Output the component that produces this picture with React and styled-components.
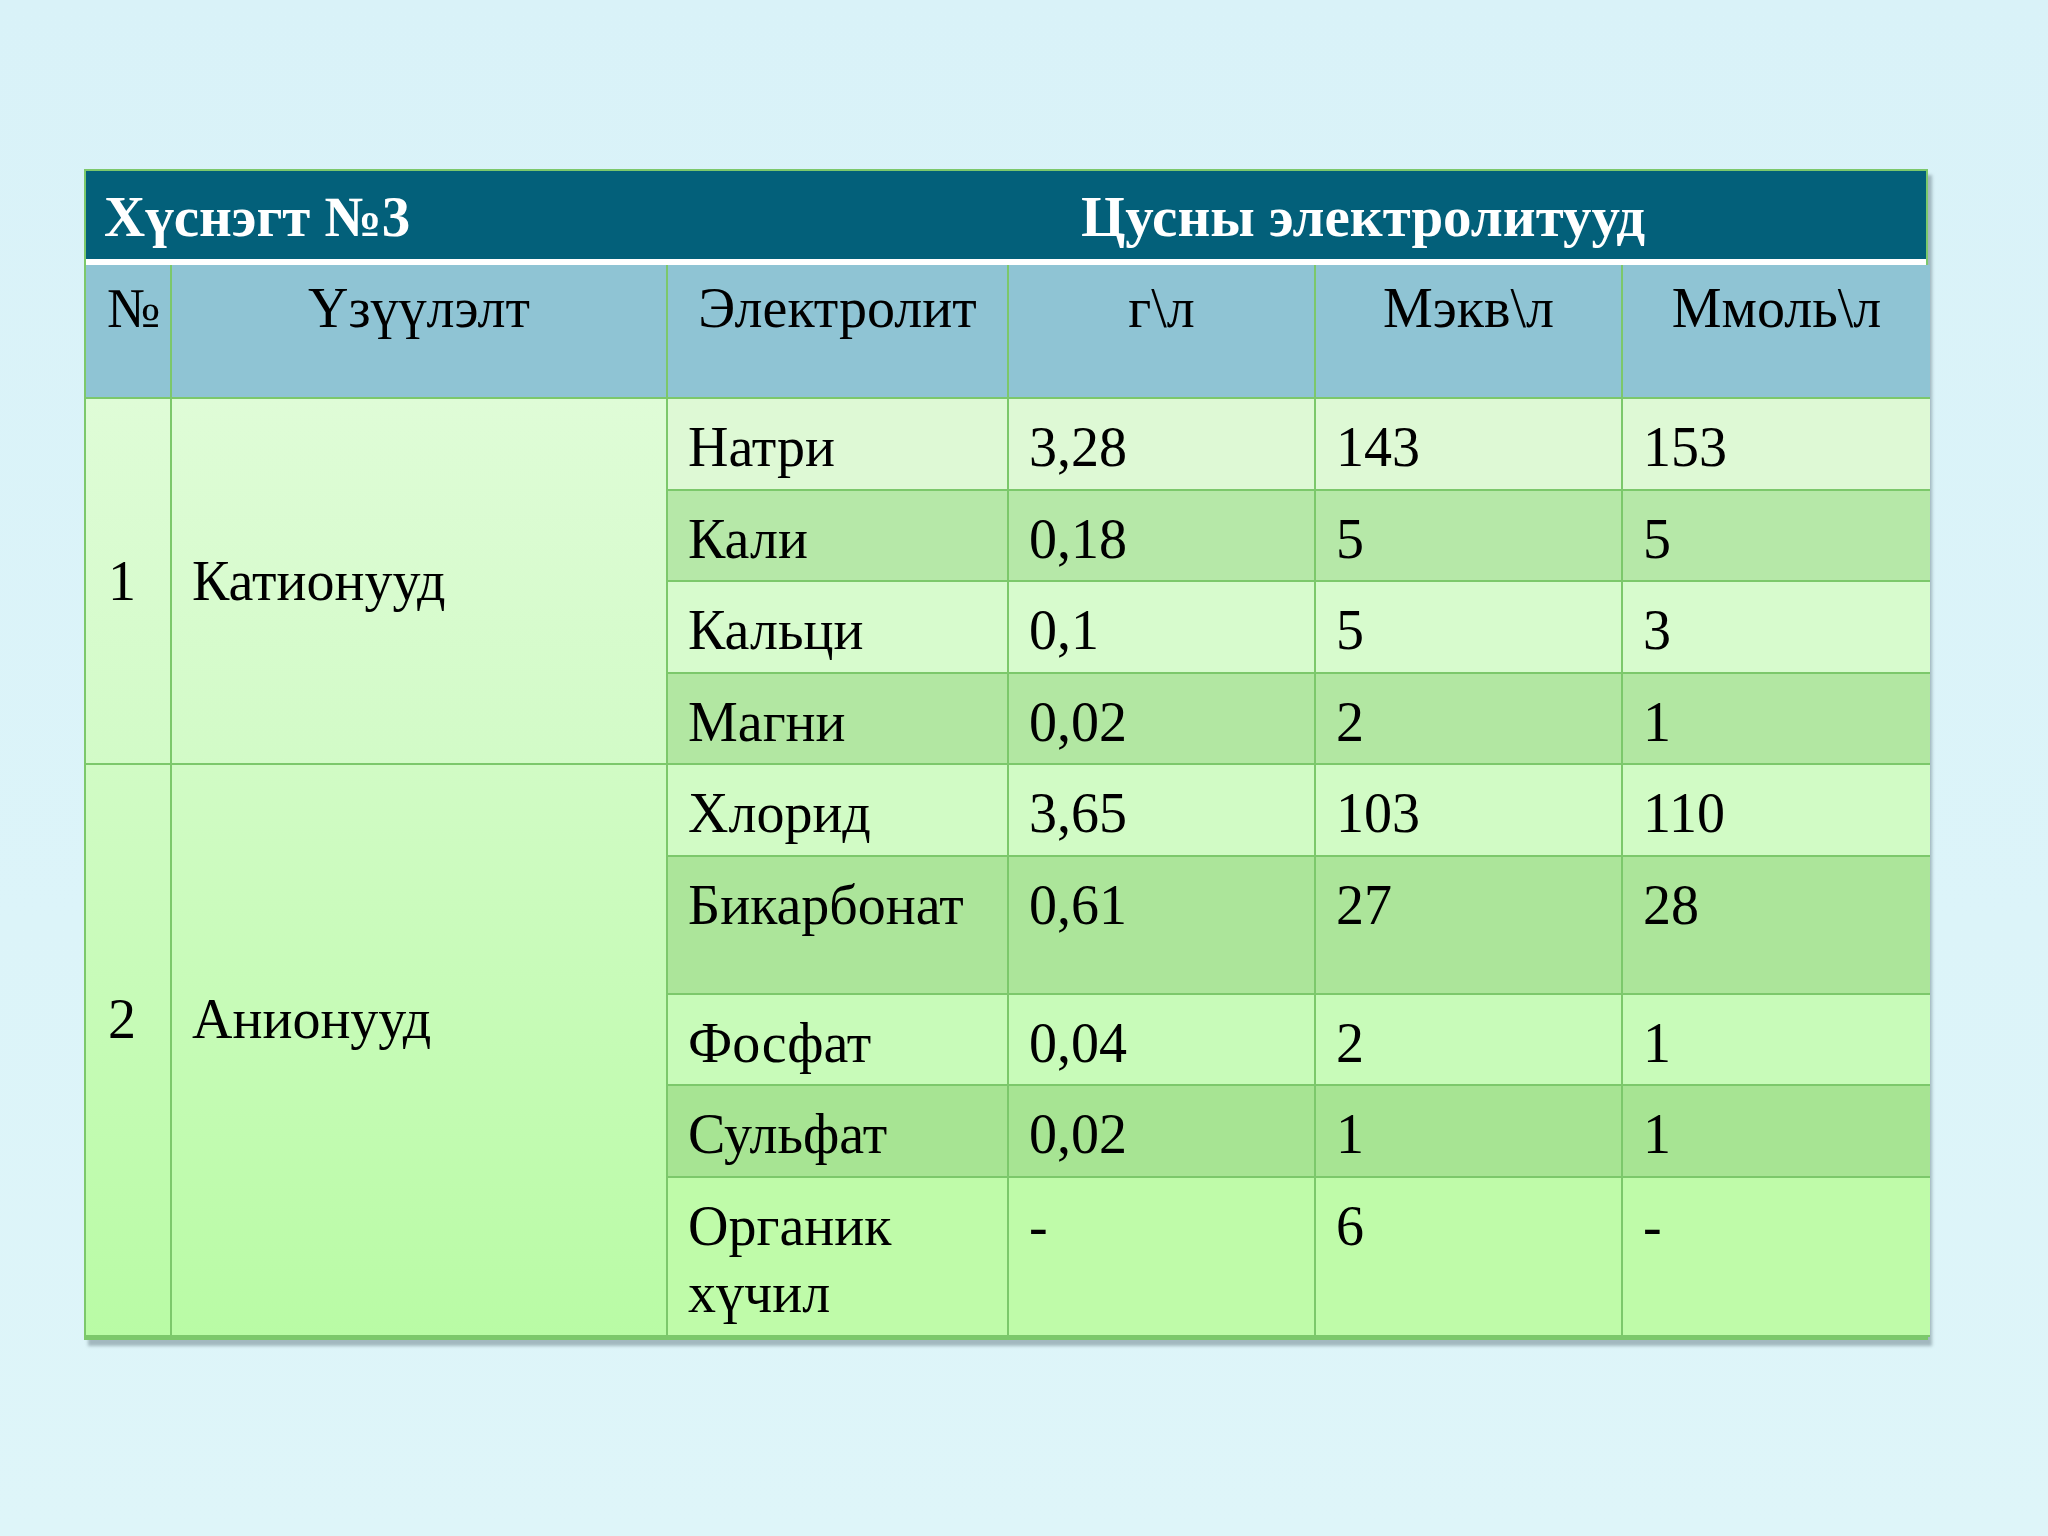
import React from 'react';
import styled, { createGlobalStyle } from 'styled-components';

const GlobalStyle = createGlobalStyle`
  html, body {
    margin: 0;
    padding: 0;
  }
  body {
    background: linear-gradient(180deg, #d9f2f8 0%, #dcf4f9 60%, #def5f9 100%);
    min-height: 1536px;
    font-family: "Liberation Serif", "Times New Roman", serif;
  }
`;

const columns = [85, 496, 341, 307, 307, 308];

const cations = [
  { name: 'Натри', g: '3,28', meq: '143', mmol: '153' },
  { name: 'Кали', g: '0,18', meq: '5', mmol: '5' },
  { name: 'Кальци', g: '0,1', meq: '5', mmol: '3' },
  { name: 'Магни', g: '0,02', meq: '2', mmol: '1' },
];

const anions = [
  { name: 'Хлорид', g: '3,65', meq: '103', mmol: '110' },
  { name: 'Бикарбонат', g: '0,61', meq: '27', mmol: '28', tall: true },
  { name: 'Фосфат', g: '0,04', meq: '2', mmol: '1' },
  { name: 'Сульфат', g: '0,02', meq: '1', mmol: '1' },
  { name: 'Органик хүчил', g: '-', meq: '6', mmol: '-', last: true },
];

const lightRows = ['#def9d5', '#d7fbcd', '#d1fbc5', '#c8fbb9', '#bffba9'];
const darkRows = ['#b6e8a8', '#b2e7a2', '#ace59a', '#a7e493'];

export default function App() {
  let light = 0;
  let dark = 0;
  let index = 0;
  const rowTone = () => (index++ % 2 === 0 ? lightRows[light++] : darkRows[dark++]);

  const renderGroup = (items, num, label, tone, lift) =>
    items.map((item, i) => {
      const bg = rowTone();
      return (
        <BodyRow key={item.name} $height={item.last ? 159 : item.tall ? 138 : 91.5}>
          {i === 0 && (
            <>
              <GroupCell rowSpan={items.length} $from={tone[0]} $to={tone[1]} $lift={lift}>{num}</GroupCell>
              <GroupCell rowSpan={items.length} $from={tone[0]} $to={tone[1]} $lift={lift}>{label}</GroupCell>
            </>
          )}
          <Cell $bg={bg}>{item.name}</Cell>
          <Cell $bg={bg}>{item.g}</Cell>
          <Cell $bg={bg}>{item.meq}</Cell>
          <Cell $bg={bg}>{item.mmol}</Cell>
        </BodyRow>
      );
    });

  return (
    <>
      <GlobalStyle />
      <Page>
        <Card>
          <TitleBar>
            <Title>Хүснэгт №3</Title>
            <Title>Цусны электролитууд</Title>
          </TitleBar>
          <Table>
            <colgroup>
              {columns.map((w, i) => (
                <col key={i} style={{ width: w }} />
              ))}
            </colgroup>
            <thead>
              <tr>
                <HeadCell $left>№</HeadCell>
                <HeadCell>Үзүүлэлт</HeadCell>
                <HeadCell>Электролит</HeadCell>
                <HeadCell>г\л</HeadCell>
                <HeadCell>Мэкв\л</HeadCell>
                <HeadCell>Ммоль\л</HeadCell>
              </tr>
            </thead>
            <tbody>
              {renderGroup(cations, '1', 'Катионууд', ['#dffcd7', '#d2fbc7'], 0)}
              {renderGroup(anions, '2', 'Анионууд', ['#d1fbc5', '#b9fba5'], 60)}
            </tbody>
          </Table>
        </Card>
      </Page>
    </>
  );
}

const Page = styled.div`
  padding: 169px 0 0 84px;
`;

const Card = styled.div`
  width: 1844px;
  border: 2px solid #7cc86b;
  border-bottom-width: 3px;
  box-sizing: border-box;
  background: #ffffff;
  box-shadow: 4px 6px 3px rgba(90, 110, 120, 0.45);
`;

const TitleBar = styled.div`
  display: grid;
  grid-template-columns: 974px 1fr;
  height: 88px;
  background: #03607a;
  border-bottom: 6px solid #ffffff;
`;

const Title = styled.div`
  padding: 12px 18px 0;
  font-size: 57px;
  line-height: 67px;
  font-weight: bold;
  color: #ffffff;
  white-space: nowrap;
  &:last-child {
    padding-left: 21px;
  }
`;

const Table = styled.table`
  width: 100%;
  table-layout: fixed;
  border-collapse: collapse;
  font-size: 56px;
  line-height: 67px;
  color: #000000;
`;

const HeadCell = styled.th`
  height: 133px;
  box-sizing: border-box;
  padding: 10px ${(p) => (p.$left ? '0 0 21px' : '0')};
  text-align: ${(p) => (p.$left ? 'left' : 'center')};
  vertical-align: top;
  font-weight: normal;
  background: #8fc4d4;
  border-left: 2px solid #7cc86b;
  border-bottom: 2px solid #7cc86b;
  white-space: nowrap;
  &:first-child {
    border-left: none;
  }
`;

const BodyRow = styled.tr`
  height: ${(p) => p.$height}px;
`;

const Cell = styled.td`
  box-sizing: border-box;
  padding: 15px 12px 0 20px;
  vertical-align: top;
  background: ${(p) => p.$bg};
  border: 2px solid #7cc86b;
  &:last-child {
    border-right: none;
  }
`;

const GroupCell = styled.td`
  padding: 0 10px ${(p) => p.$lift}px 20px;
  vertical-align: middle;
  background: linear-gradient(180deg, ${(p) => p.$from}, ${(p) => p.$to});
  border: 2px solid #7cc86b;
  &:first-child {
    border-left: none;
    padding-left: 22px;
  }
`;
